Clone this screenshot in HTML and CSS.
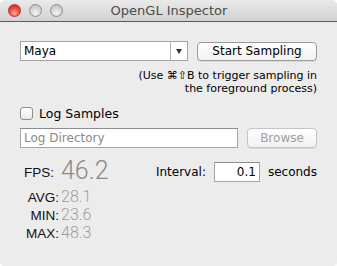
FILE: index.html
```html
<!DOCTYPE html>
<html lang="en">
  <head>
    <meta charset="UTF-8" />
    <meta name="viewport" content="width=device-width, initial-scale=1.0" />
    <title>OpenGL Inspector</title>
    <link rel="stylesheet" href="styles.css">
  </head>
  <body>
    <div class="window">
      <div class="titlebar">
        <div class="lights">
          <span class="light close"></span>
          <span class="light"></span>
          <span class="light"></span>
        </div>
        <div class="title">OpenGL Inspector</div>
      </div>

      <div class="content">
        <div class="row">
          <div class="select">
            <span class="select-value">Maya</span>
            <span class="select-arrow"></span>
          </div>
          <button type="button" class="btn start">Start Sampling</button>
        </div>

        <p class="help">(Use &#8984;&#8679;B to trigger sampling in<br />the foreground process)</p>

        <label class="check">
          <span class="box"></span>
          Log Samples
        </label>

        <div class="row log-row">
          <input type="text" class="field" placeholder="Log Directory" />
          <button type="button" class="btn browse" disabled>Browse</button>
        </div>

        <div class="bottom">
          <div class="stats">
            <span class="label fps-label">FPS:</span>
            <span class="value big">46.2</span>
            <span class="label">AVG:</span>
            <span class="value first">28.1</span>
            <span class="label">MIN:</span>
            <span class="value">23.6</span>
            <span class="label">MAX:</span>
            <span class="value">48.3</span>
          </div>
          <div class="interval">
            <span>Interval:</span>
            <input type="text" class="field small" value="0.1" />
            <span>seconds</span>
          </div>
        </div>
      </div>
    </div>
  </body>
</html>
```

FILE: styles.css
```css
body {
  margin: 0;
  background: #ffffff;
  font-family: "DejaVu Sans", sans-serif;
  font-size: 12px;
  color: #000;
}

.window {
  width: 337px;
  height: 266px;
  background: #ececec;
  border-radius: 5px 5px 4px 4px;
  overflow: hidden;
}

.titlebar {
  height: 21px;
  border-bottom: 1px solid #5c5c5c;
  background: linear-gradient(#eaeaea, #d2d2d2);
  display: flex;
  align-items: center;
}

.lights {
  display: flex;
  gap: 8px;
  margin-left: 8px;
}

.light {
  width: 11px;
  height: 11px;
  border-radius: 50%;
  border: 1px solid #8f8f8f;
  background: radial-gradient(circle at 50% 70%, #f4f4f4, #cfcfcf 60%, #b3b3b3);
}

.light.close {
  border-color: #a9322c;
  background: radial-gradient(circle at 50% 75%, #ffb0a6, #f04a3d 50%, #c3281e);
}

.title {
  flex: 1;
  text-align: center;
  margin-right: 62px;
  font-size: 13px;
  color: #4a4a4a;
}

.content {
  padding: 19px 20px 0 20px;
}

.row {
  display: flex;
  gap: 9px;
  align-items: center;
}

.select {
  width: 166px;
  height: 18px;
  border: 1px solid #a3a3a3;
  background: #fff;
  display: flex;
  align-items: center;
}

.select-value {
  flex: 1;
  padding-left: 3px;
  font-size: 12px;
}

.select-arrow {
  width: 16px;
  height: 18px;
  border-left: 1px solid #b5b5b5;
  position: relative;
}

.select-arrow::after {
  content: "";
  position: absolute;
  left: 5px;
  top: 7px;
  border-left: 3.5px solid transparent;
  border-right: 3.5px solid transparent;
  border-top: 5px solid #333;
}

.btn {
  font-family: "DejaVu Sans", sans-serif;
  font-size: 12px;
  height: 19px;
  padding: 0;
  border: 1px solid #9b9b9b;
  border-radius: 4px;
  background: linear-gradient(#ffffff, #f1f1f1);
  box-shadow: 0 1px 0 rgba(0, 0, 0, 0.08);
  color: #000;
}

.start {
  width: 120px;
}

.help {
  margin: 8px 0 0;
  text-align: right;
  font-size: 11px;
  line-height: 13px;
}

.check {
  display: flex;
  align-items: center;
  gap: 6px;
  margin-top: 10px;
  height: 16px;
  font-size: 12.5px;
}

.box {
  width: 11px;
  height: 11px;
  border: 1px solid #8e8e8e;
  border-radius: 3px;
  background: linear-gradient(#ffffff, #e9e9e9);
}

.log-row {
  margin-top: 7px;
  align-items: flex-end;
}

.field {
  width: 216px;
  height: 18px;
  box-sizing: content-box;
  margin: 0;
  padding: 0 3px;
  border: 1px solid #a6a6a6;
  border-top-color: #8c8c8c;
  background: #fff;
  font-family: "DejaVu Sans", sans-serif;
  font-size: 12px;
  outline: none;
}

.log-row .field {
  width: 210px;
}

.field::placeholder {
  color: #8a8a8a;
}

.browse {
  width: 70px;
  height: 20px;
  color: #a0a0a0;
  border-color: #c4c4c4;
}

.bottom {
  display: flex;
  margin-top: 10px;
}

.stats {
  width: 132px;
  padding-left: 4px;
  display: grid;
  grid-template-columns: 35px auto;
  column-gap: 2px;
  align-items: baseline;
}

.label {
  text-align: right;
  font-family: "Liberation Sans", sans-serif;
  font-size: 13.5px;
  line-height: 17px;
  color: #111;
}

.fps-label {
  align-self: end;
  padding-right: 7px;
  padding-bottom: 3px;
}

.value {
  font-family: "Roboto", "Liberation Sans", sans-serif;
  font-weight: 300;
  font-size: 16px;
  line-height: 17px;
  color: #9d9d9d;
}

.value.first {
  margin-top: 4px;
}

.value.big {
  font-size: 25px;
  line-height: 26px;
  color: #8a8a8a;
}

.interval {
  display: flex;
  align-items: center;
  gap: 8px;
  height: 20px;
  margin-top: 4px;
  margin-left: 4px;
  font-size: 12px;
}

.field.small {
  width: 38px;
  height: 18px;
  text-align: right;
}
```
